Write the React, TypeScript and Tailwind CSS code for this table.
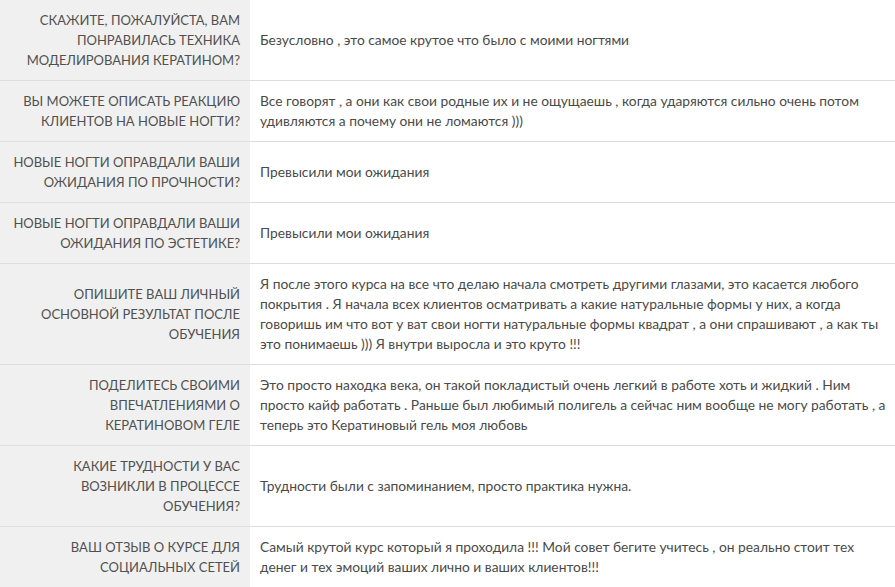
import React from "react";

const rows: { q: string[]; a: string[] }[] = [
  {
    q: ["СКАЖИТЕ, ПОЖАЛУЙСТА, ВАМ", "ПОНРАВИЛАСЬ ТЕХНИКА", "МОДЕЛИРОВАНИЯ КЕРАТИНОМ?"],
    a: ["Безусловно , это самое крутое что было с моими ногтями"],
  },
  {
    q: ["ВЫ МОЖЕТЕ ОПИСАТЬ РЕАКЦИЮ", "КЛИЕНТОВ НА НОВЫЕ НОГТИ?"],
    a: [
      "Все говорят , а они как свои родные их и не ощущаешь , когда ударяются сильно очень потом",
      "удивляются а почему они не ломаются )))",
    ],
  },
  {
    q: ["НОВЫЕ НОГТИ ОПРАВДАЛИ ВАШИ", "ОЖИДАНИЯ ПО ПРОЧНОСТИ?"],
    a: ["Превысили мои ожидания"],
  },
  {
    q: ["НОВЫЕ НОГТИ ОПРАВДАЛИ ВАШИ", "ОЖИДАНИЯ ПО ЭСТЕТИКЕ?"],
    a: ["Превысили мои ожидания"],
  },
  {
    q: ["ОПИШИТЕ ВАШ ЛИЧНЫЙ", "ОСНОВНОЙ РЕЗУЛЬТАТ ПОСЛЕ", "ОБУЧЕНИЯ"],
    a: [
      "Я после этого курса на все что делаю начала смотреть другими глазами, это касается любого",
      "покрытия . Я начала всех клиентов осматривать а какие натуральные формы у них, а когда",
      "говоришь им что вот у ват свои ногти натуральные формы квадрат , а они спрашивают , а как ты",
      "это понимаешь ))) Я внутри выросла и это круто !!!",
    ],
  },
  {
    q: ["ПОДЕЛИТЕСЬ СВОИМИ", "ВПЕЧАТЛЕНИЯМИ О", "КЕРАТИНОВОМ ГЕЛЕ"],
    a: [
      "Это просто находка века, он такой покладистый очень легкий в работе хоть и жидкий . Ним",
      "просто кайф работать . Раньше был любимый полигель а сейчас ним вообще не могу работать , а",
      "теперь это Кератиновый гель моя любовь",
    ],
  },
  {
    q: ["КАКИЕ ТРУДНОСТИ У ВАС", "ВОЗНИКЛИ В ПРОЦЕССЕ", "ОБУЧЕНИЯ?"],
    a: ["Трудности были с запоминанием, просто практика нужна."],
  },
  {
    q: ["ВАШ ОТЗЫВ О КУРСЕ ДЛЯ", "СОЦИАЛЬНЫХ СЕТЕЙ"],
    a: [
      "Самый крутой курс который я проходила !!! Мой совет бегите учитесь , он реально стоит тех",
      "денег и тех эмоций ваших лично и ваших клиентов!!!",
    ],
  },
];

export default function App() {
  return (
    <div
      className="w-[895px] h-[587px] overflow-hidden bg-white text-[#4a4a4a]"
      style={{ fontFamily: "Lato, 'Open Sans', sans-serif" }}
    >
      {rows.map((r, i) => (
        <div key={i} className="flex border-b border-[#dedede]">
          <div className="w-[250px] shrink-0 bg-[#f0f0f0] flex flex-col justify-center items-end pr-[10px] py-[10px] text-[13px] leading-[20px] text-right text-[#505050]">
            {r.q.map((l, j) => (
              <span key={j} className="block whitespace-nowrap">
                {l}
              </span>
            ))}
          </div>
          <div className="flex-1 flex flex-col justify-center pl-[10px] py-[10px] text-[13.8px] leading-[20px]">
            {r.a.map((l, j) => (
              <span key={j} className="block whitespace-nowrap">
                {l}
              </span>
            ))}
          </div>
        </div>
      ))}
    </div>
  );
}
